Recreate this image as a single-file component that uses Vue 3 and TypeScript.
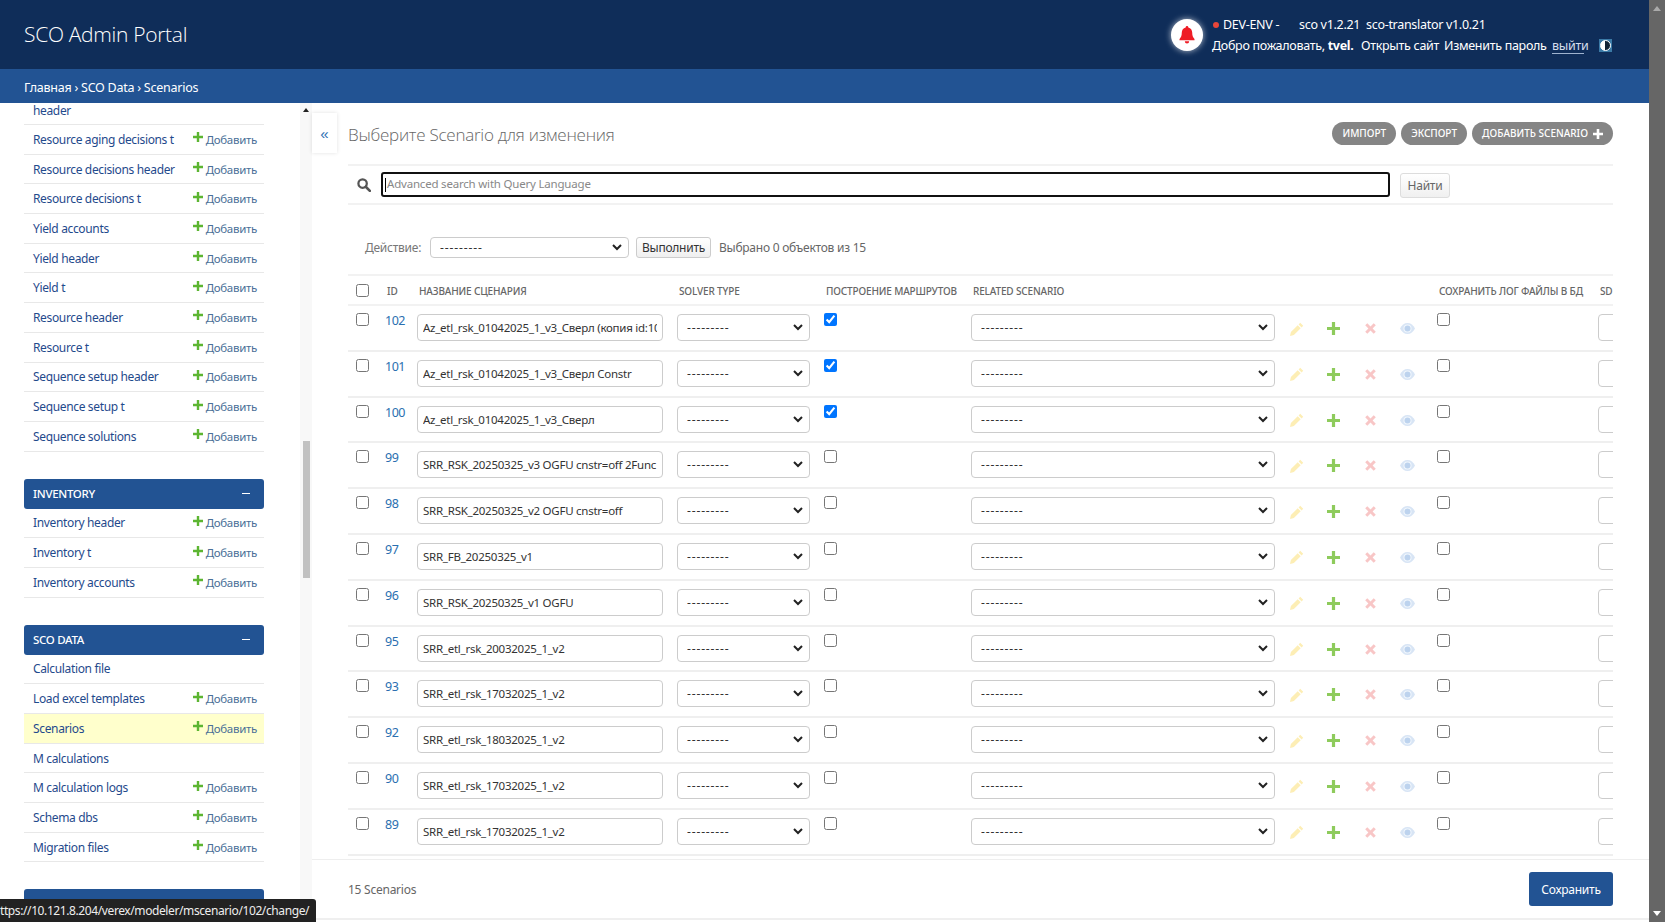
<script setup lang="ts">
interface SideRow { name: string; add: boolean; active?: boolean; cut?: boolean }
interface Group { title?: string; rows: SideRow[] }
const groups: Group[] = [
  { rows: [
    { name: 'header', add: false, cut: true },
    { name: 'Resource aging decisions t', add: true },
    { name: 'Resource decisions header', add: true },
    { name: 'Resource decisions t', add: true },
    { name: 'Yield accounts', add: true },
    { name: 'Yield header', add: true },
    { name: 'Yield t', add: true },
    { name: 'Resource header', add: true },
    { name: 'Resource t', add: true },
    { name: 'Sequence setup header', add: true },
    { name: 'Sequence setup t', add: true },
    { name: 'Sequence solutions', add: true },
  ] },
  { title: 'INVENTORY', rows: [
    { name: 'Inventory header', add: true },
    { name: 'Inventory t', add: true },
    { name: 'Inventory accounts', add: true },
  ] },
  { title: 'SCO DATA', rows: [
    { name: 'Calculation file', add: false },
    { name: 'Load excel templates', add: true },
    { name: 'Scenarios', add: true, active: true },
    { name: 'M calculations', add: false },
    { name: 'M calculation logs', add: true },
    { name: 'Schema dbs', add: true },
    { name: 'Migration files', add: true },
  ] },
  { title: ' ', rows: [] },
]
const rows = [
  { id: 102, name: 'Az_etl_rsk_01042025_1_v3_Сверл (копия id:100)', route: true },
  { id: 101, name: 'Az_etl_rsk_01042025_1_v3_Сверл Constr', route: true },
  { id: 100, name: 'Az_etl_rsk_01042025_1_v3_Сверл', route: true },
  { id: 99, name: 'SRR_RSK_20250325_v3 OGFU cnstr=off 2Func', route: false },
  { id: 98, name: 'SRR_RSK_20250325_v2 OGFU cnstr=off', route: false },
  { id: 97, name: 'SRR_FB_20250325_v1', route: false },
  { id: 96, name: 'SRR_RSK_20250325_v1 OGFU', route: false },
  { id: 95, name: 'SRR_etl_rsk_20032025_1_v2', route: false },
  { id: 93, name: 'SRR_etl_rsk_17032025_1_v2', route: false },
  { id: 92, name: 'SRR_etl_rsk_18032025_1_v2', route: false },
  { id: 90, name: 'SRR_etl_rsk_17032025_1_v2', route: false },
  { id: 89, name: 'SRR_etl_rsk_17032025_1_v2', route: false },
]
</script>

<template>
  <div class="page">
    <div class="window">
      <header class="top">
        <div class="brand">SCO Admin Portal</div>
        <div class="top-right">
          <div class="bell">
            <svg width="16" height="18" viewBox="0 0 16 18"><path fill="#ee1c25" d="M8 0a1.300 1.300 0 0 0-1.300 1.400C4.200 2 2.800 4 2.800 6.600c0 3.600-.9 5-2.300 6.400v1.300h15V13c-1.400-1.400-2.300-2.800-2.300-6.400 0-2.600-1.400-4.600-3.900-5.200A1.300 1.300 0 0 0 8 0zM5.800 15.300a2.200 2.200 0 0 0 4.400 0z"/></svg>
          </div>
          <div class="top-lines">
            <div class="line one">
              <span class="dot"></span><span class="env">DEV-ENV -</span><span class="v1">sco v1.2.21</span><span>sco-translator v1.0.21</span>
            </div>
            <div class="line two">
              <span class="welcome">Добро пожаловать, <b>tvel.</b></span>
              <span class="open">Открыть сайт</span>
              <span class="pass">Изменить пароль</span>
              <span class="logout">выйти</span>
              <span class="contrast"><i></i></span>
            </div>
          </div>
        </div>
      </header>
      <nav class="crumbs">Главная › SCO Data › Scenarios</nav>

      <div class="body">
        <aside class="side">
          <section v-for="(g, gi) in groups" :key="gi" class="group">
            <div v-if="g.title" class="caption">
              <span>{{ g.title }}</span><span v-if="g.title.trim()" class="minus"></span>
            </div>
            <div
              v-for="r in g.rows"
              :key="r.name"
              class="side-row"
              :class="{ active: r.active, cut: r.cut }"
            >
              <span class="side-name">{{ r.name }}</span>
              <span v-if="r.add" class="side-add">
                <svg width="10" height="10" viewBox="0 0 10 10"><path fill="#5cb531" d="M3.800 0h2.400v3.800H10v2.400H6.200V10H3.800V6.200H0V3.800h3.800z"/></svg>
                Добавить
              </span>
            </div>
          </section>
        </aside>
        <div class="side-bar">
          <span class="up"></span>
          <span class="thumb"></span>
        </div>

        <main class="main">
          <button class="toggle">«</button>
          <div class="title-row">
            <h1>Выберите Scenario для изменения</h1>
            <div class="tools">
              <span class="pill">ИМПОРТ</span>
              <span class="pill">ЭКСПОРТ</span>
              <span class="pill">ДОБАВИТЬ SCENARIO
                <svg width="10" height="10" viewBox="0 0 10 10"><path fill="#fff" d="M3.700 0h2.600v3.700H10v2.600H6.300V10H3.700V6.300H0V3.700h3.700z"/></svg>
              </span>
            </div>
          </div>

          <div class="search">
            <svg class="loupe" width="14" height="14" viewBox="0 0 15 15"><circle cx="6" cy="6" r="4.500" fill="none" stroke="#555" stroke-width="2.400"/><path d="M9.600 9.600l4.200 4.200" stroke="#555" stroke-width="2.800" stroke-linecap="round"/></svg>
            <div class="q"><span class="caret"></span><span class="ph">Advanced search with Query Language</span></div>
            <button class="find">Найти</button>
          </div>

          <div class="actions">
            <label>Действие:</label>
            <select class="action-select"><option>---------</option></select>
            <button class="run">Выполнить</button>
            <span class="count">Выбрано 0 объектов из 15</span>
          </div>

          <div class="table-wrap">
            <table>
              <colgroup>
                <col class="w1" /><col class="w2" /><col class="w3" /><col class="w4" />
                <col class="w5" /><col class="w6" /><col class="w7" /><col class="w8" /><col class="w9" />
              </colgroup>
              <thead>
                <tr>
                  <th class="c-check"><input type="checkbox" /></th>
                  <th class="c-id">ID</th>
                  <th>НАЗВАНИЕ СЦЕНАРИЯ</th>
                  <th>SOLVER TYPE</th>
                  <th class="h-route">ПОСТРОЕНИЕ МАРШРУТОВ</th>
                  <th>RELATED SCENARIO</th>
                  <th></th>
                  <th>СОХРАНИТЬ ЛОГ ФАЙЛЫ В БД</th>
                  <th>SD</th>
                </tr>
              </thead>
              <tbody>
                <tr v-for="r in rows" :key="r.id">
                  <td class="c-check"><input type="checkbox" /></td>
                  <td class="c-id"><a>{{ r.id }}</a></td>
                  <td><input class="name" type="text" :value="r.name" /></td>
                  <td><select class="solver"><option>---------</option></select></td>
                  <td><input class="flag" type="checkbox" :checked="r.route" /></td>
                  <td><select class="related"><option>---------</option></select></td>
                  <td>
                    <div class="icons">
                      <svg width="14" height="14" viewBox="0 0 14 14"><path fill="#fdeeb5" d="M10.200.8l3 3-1.600 1.600-3-3zM7.700 3.300l3 3-6.800 6.800-3.900.9.9-3.900z"/></svg>
                      <svg width="13" height="13" viewBox="0 0 13 13"><path fill="#8ecb5c" d="M4.900 0h3.200v4.900H13v3.200H8.100V13H4.900V8.100H0V4.900h4.900z"/></svg>
                      <svg width="11" height="11" viewBox="0 0 11 11"><path fill="#f8c6c6" d="M2.300.2l3.200 3.200L8.700.2l2.100 2.100-3.200 3.200 3.200 3.200-2.100 2.100-3.200-3.200-3.200 3.200L.2 8.700l3.200-3.200L.2 2.300z"/></svg>
                      <svg width="15" height="11" viewBox="0 0 15 11"><path fill="#d8e5f5" d="M7.500 0C4.300 0 1.700 2 0 5.500 1.700 9 4.300 11 7.500 11S13.300 9 15 5.500C13.300 2 10.700 0 7.500 0z"/><circle cx="7.500" cy="5.500" r="4" fill="#f1f6fc"/><circle cx="7.500" cy="5.500" r="3" fill="#bdd3ee"/></svg>
                    </div>
                  </td>
                  <td><input type="checkbox" /></td>
                  <td><input class="sd" type="text" /></td>
                </tr>
              </tbody>
            </table>
          </div>

          <footer class="foot">
            <span>15 Scenarios</span>
            <button class="save">Сохранить</button>
          </footer>
        </main>
      </div>
    </div>
    <div class="win-bar"><span class="w-up"></span><span class="w-down"></span></div>
    <div class="status">ttps://10.121.8.204/verex/modeler/mscenario/102/change/</div>
  </div>
</template>

<style>
html, body { margin: 0; background: #fff; overflow: hidden; }
</style>

<style scoped>
.page { position: relative; width: 1665px; height: 922px; overflow: hidden; display: flex; font: 12px "Noto Sans", "Open Sans", sans-serif; letter-spacing: -.25px; color: #555; background: #fff; }
.window { width: 1649px; display: flex; flex-direction: column; }
.win-bar { width: 16px; background: #666; display: flex; flex-direction: column; justify-content: space-between; align-items: center; padding: 6px 0; box-sizing: border-box; }
.w-up { border: 4px solid transparent; border-top: 0; border-bottom: 5px solid #aaa; }
.w-down { border: 4px solid transparent; border-bottom: 0; border-top: 5px solid #fff; }

.top { height: 69px; flex: none; background: #0f2d59; color: #fff; display: flex; justify-content: space-between; }
.brand { font: 300 21px "Open Sans", sans-serif; letter-spacing: -.3px; padding: 20px 0 0 24px; }
.top-right { display: flex; padding: 14px 0 0; width: 478px; }
.bell { width: 32px; height: 32px; margin: 5px 9px 0 0; border-radius: 50%; background: #fff; box-shadow: 0 0 6px rgba(255,255,255,.7); display: flex; align-items: center; justify-content: center; }
.top-lines { flex: 1; }
.line { display: flex; align-items: center; height: 21px; font-size: 12.500px; letter-spacing: -.3px; white-space: nowrap; }
.dot { width: 6px; height: 6px; border-radius: 50%; background: #e8463a; margin: 0 4px 0 1px; }
.env { width: 76px; }
.v1 { width: 67px; }
.welcome { width: 149px; }
.welcome b { font-weight: 700; }
.open { width: 83px; }
.pass { width: 108px; }
.logout { width: 32px; border-bottom: 1px solid #9fb3cf; color: #d5dfec; line-height: 15px; margin-right: 15px; }
.contrast { width: 13px; height: 13px; background: #3b7aa6; display: flex; align-items: center; justify-content: center; }
.contrast i { width: 11px; height: 11px; border-radius: 50%; background: linear-gradient(90deg, #fff 50%, #123 50%); border: 1px solid #fff; box-sizing: border-box; }

.crumbs { height: 34px; flex: none; box-sizing: border-box; background: #225393; color: #fff; font-size: 12.500px; line-height: 37px; padding-left: 24px; }
.body { flex: 1; display: flex; min-height: 0; }

.side { width: 300px; flex: none; overflow: hidden; padding-left: 24px; box-sizing: border-box; }
.group { width: 240px; margin-bottom: 27px; }
.caption { height: 30px; background: #225393; border-radius: 3px; color: #fff; display: flex; justify-content: space-between; align-items: center; padding: 0 14px 0 9px; font-size: 11.500px; font-weight: 500; letter-spacing: -.3px; }
.minus { width: 8px; height: 1px; background: #fff; }
.side-row { height: 29.700px; box-sizing: border-box; border-bottom: 1px solid #e8e8e8; display: flex; justify-content: space-between; align-items: center; padding: 0 7px 0 9px; }
.side-row.cut { height: 22px; padding-bottom: 7px; }
.side-row.active { background: #ffffcc; }
.side-name { color: #1f4a8c; font-size: 12px; letter-spacing: -.35px; }
.side-add { color: #4a6f97; font-size: 11.500px; letter-spacing: -.3px; display: inline-flex; align-items: center; gap: 3px; }
.side-add svg { position: relative; top: -2px; }

.side-bar { width: 12px; flex: none; background: #f8f8f8; display: flex; flex-direction: column; align-items: center; }
.up { margin-top: 5px; border: 3px solid transparent; border-top: 0; border-bottom: 4px solid #222; }
.thumb { width: 7px; height: 137px; margin-top: 329px; background: #c1c1c1; }

.main { position: relative; flex: 1; min-width: 0; padding: 0 36px; display: flex; flex-direction: column; }
.toggle { position: absolute; left: 0; top: 10px; width: 25px; height: 40px; border: 0; background: #fff; box-shadow: 0 0 4px rgba(0,0,0,.12); color: #2c6fb3; font-size: 15px; padding: 0; }
.title-row { height: 61px; flex: none; display: flex; justify-content: space-between; align-items: flex-start; box-sizing: border-box; }
h1 { margin: 20px 0 0; font: 300 17px "Open Sans", sans-serif; letter-spacing: -.25px; color: #666; }
.tools { display: flex; gap: 5px; margin-top: 19px; }
.pill { height: 23px; line-height: 23px; border-radius: 12px; background: #858585; color: #fff; font-size: 10px; font-weight: 500; padding: 0 10px; display: inline-flex; gap: 5px; align-items: center; letter-spacing: 0; }

.search { height: 41px; flex: none; box-sizing: border-box; border-top: 2px solid #f2f2f2; border-bottom: 2px solid #f2f2f2; display: flex; align-items: center; padding-left: 9px; }
.loupe { margin-right: 10px; }
.q { width: 1009px; height: 25px; box-sizing: border-box; border: 2px solid #111; border-radius: 3px; color: #888; font-size: 11.500px; letter-spacing: -.2px; line-height: 21px; padding-left: 2px; display: flex; align-items: center; }
.ph { position: relative; top: -1px; }
.caret { width: 1px; height: 14px; background: #000; margin-right: 1px; }
.find { margin: 2px 0 0 10px; width: 50px; height: 25px; border: 1px solid #ddd; border-radius: 3px; background: linear-gradient(#fff, #f0f0f0); color: #666; font: 12px "Noto Sans", sans-serif; letter-spacing: -.25px; padding: 0; }

select { appearance: none; background: #fff url("data:image/svg+xml,%3Csvg xmlns='http://www.w3.org/2000/svg' width='10' height='7'%3E%3Cpath d='M1 1l4 4 4-4' stroke='%23222' stroke-width='2' fill='none'/%3E%3C/svg%3E") no-repeat right 6px center; }
.actions { height: 71px; flex: none; box-sizing: border-box; display: flex; align-items: center; padding: 16px 0 0 17px; border-bottom: 2px solid #f2f2f2; }
.actions label { width: 65px; color: #777; }
.action-select { width: 199px; height: 21px; border: 1px solid #ccc; border-radius: 4px; font: 12px "Noto Sans", sans-serif; letter-spacing: .9px; color: #333; padding-left: 9px; }
.run { margin: 0 8px 0 7px; width: 75px; height: 21px; border: 1px solid #ccc; border-radius: 3px; background: linear-gradient(#fff, #efefef); color: #333; font: 12px "Noto Sans", sans-serif; letter-spacing: -.25px; padding: 0; }
.count { color: #666; }

.table-wrap { height: 583px; flex: none; overflow: hidden; }
table { border-collapse: separate; border-spacing: 0; table-layout: fixed; width: 1350px; }
.w1 { width: 32px; } .w2 { width: 37px; } .w3 { width: 260px; } .w4 { width: 149px; } .w5 { width: 145px; }
.w6 { width: 318px; } .w7 { width: 148px; } .w8 { width: 161px; } .w9 { width: 100px; }
th { height: 30px; box-sizing: border-box; border-bottom: 2px solid #f2f2f2; text-align: left; font-size: 10px; font-weight: 500; letter-spacing: -.15px; color: #666; padding: 2px 0 0 2px; white-space: nowrap; }
th.c-check { padding-top: 0; }
td { height: 45.800px; box-sizing: border-box; border-bottom: 2px solid #efefef; vertical-align: top; padding: 7px 0 0; }
input[type="checkbox"] { margin: 0; display: block; width: 13px; height: 13px; }
.c-check { padding-left: 8px; }
th.c-id { padding-left: 7px; }
td.c-id { padding: 6px 0 0 5px; }
.c-id a { color: #2a6fb0; font-size: 12.500px; letter-spacing: -.5px; }
th.h-route { padding-left: 0; }
.name, .solver, .related, .sd { height: 27px; margin-top: 1px; box-sizing: border-box; border: 1px solid #ccc; border-radius: 4px; font: 11.500px "Noto Sans", sans-serif; letter-spacing: -.25px; color: #333; display: block; }
select.solver, select.related { font-size: 12px; letter-spacing: .85px; padding-left: 9px; }
.name { width: 246px; padding: 0 5px; }
.solver { width: 133px; }
.related { width: 304px; }
.sd { width: 100px; }
input.flag { margin-left: -2px; }
.icons { display: flex; align-items: center; height: 31px; padding-left: 1px; }
.icons svg:nth-child(2) { margin-left: 23px; }
.icons svg:nth-child(3) { margin-left: 25px; }
.icons svg:nth-child(4) { margin-left: 24px; }

.foot { height: 61px; margin: 0 -36px; padding: 0 36px; flex: none; box-sizing: border-box; border-top: 1px solid #eee; border-bottom: 2px solid #efefef; display: flex; justify-content: space-between; align-items: center; color: #666; }
.save { width: 84px; height: 34px; border: 0; border-radius: 3px; background: #225393; color: #fff; font: 12px "Noto Sans", sans-serif; letter-spacing: -.25px; }

.status { position: absolute; left: 0; bottom: 0; width: 316px; height: 23px; box-sizing: border-box; background: #222; border-radius: 0 3px 0 0; color: #eee; font-size: 12px; letter-spacing: -.4px; line-height: 23px; white-space: nowrap; overflow: hidden; }
</style>
